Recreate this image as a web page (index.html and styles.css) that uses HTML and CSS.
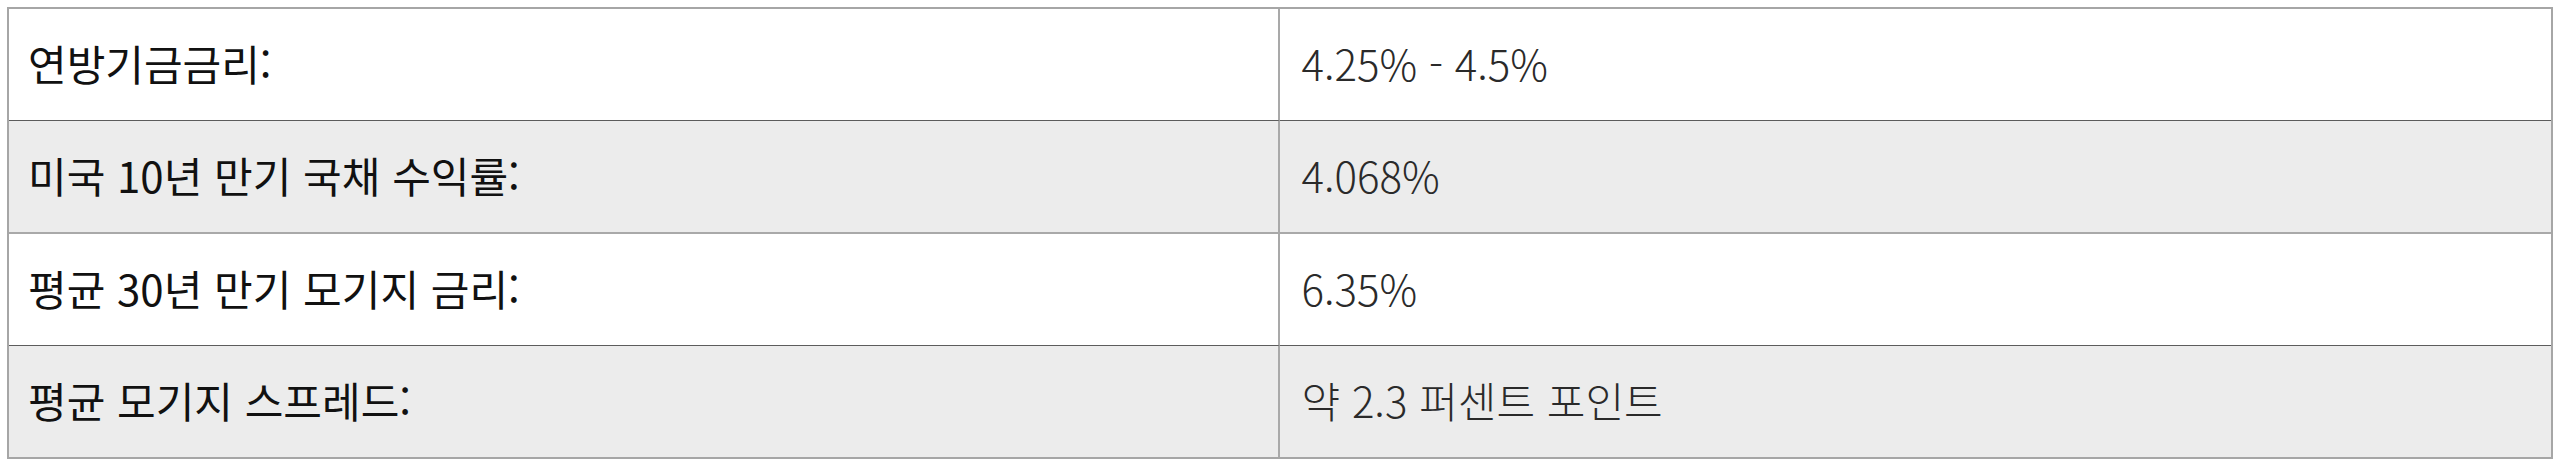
FILE: index.html
```html
<!DOCTYPE html>
<html lang="ko">
<head>
<meta charset="utf-8">
<link rel="stylesheet" href="styles.css">
</head>
<body>
<table class="rates">
  <tbody>
    <tr class="row odd">
      <td class="label">연방기금금리:</td>
      <td class="value">4.25% - 4.5%</td>
    </tr>
    <tr class="row even">
      <td class="label">미국 10년 만기 국채 수익률:</td>
      <td class="value">4.068%</td>
    </tr>
    <tr class="row odd">
      <td class="label">평균 30년 만기 모기지 금리:</td>
      <td class="value">6.35%</td>
    </tr>
    <tr class="row even last">
      <td class="label">평균 모기지 스프레드:</td>
      <td class="value">약 2.3 퍼센트 포인트</td>
    </tr>
  </tbody>
</table>
</body>
</html>
```

FILE: styles.css
```css
html, body {
  margin: 0;
  padding: 0;
  background: #ffffff;
}
body {
  padding: 7px 7px 0 7px;
  font-family: "Noto Sans CJK KR", "Noto Sans", sans-serif;
  color: #111111;
}
.rates {
  width: 2546px;
  table-layout: fixed;
  border-collapse: separate;
  border-spacing: 0;
  border: 2px solid #a6a6a6;
}
.rates td {
  width: 50%;
  font-size: 42px;
  line-height: 60px;
  padding: 24px 19px 27px 19px;
  vertical-align: top;
  text-align: left;
}
.rates .label {
  font-weight: 400;
  border-right: 2px solid #a9a9a9;
}
.rates .value {
  font-family: "Noto Sans CJK KR Light", "Noto Sans CJK KR DemiLight", "Noto Sans CJK KR", sans-serif;
  font-weight: 300;
  color: #2a2a2a;
  padding-left: 22px;
}
.row.odd td {
  background: #ffffff;
  border-bottom: 1px solid #5c5c5c;
}
.row.even td {
  background: #ececec;
  border-bottom: 2px solid #a9a9a9;
}
.row.last td {
  border-bottom: none;
}
```
